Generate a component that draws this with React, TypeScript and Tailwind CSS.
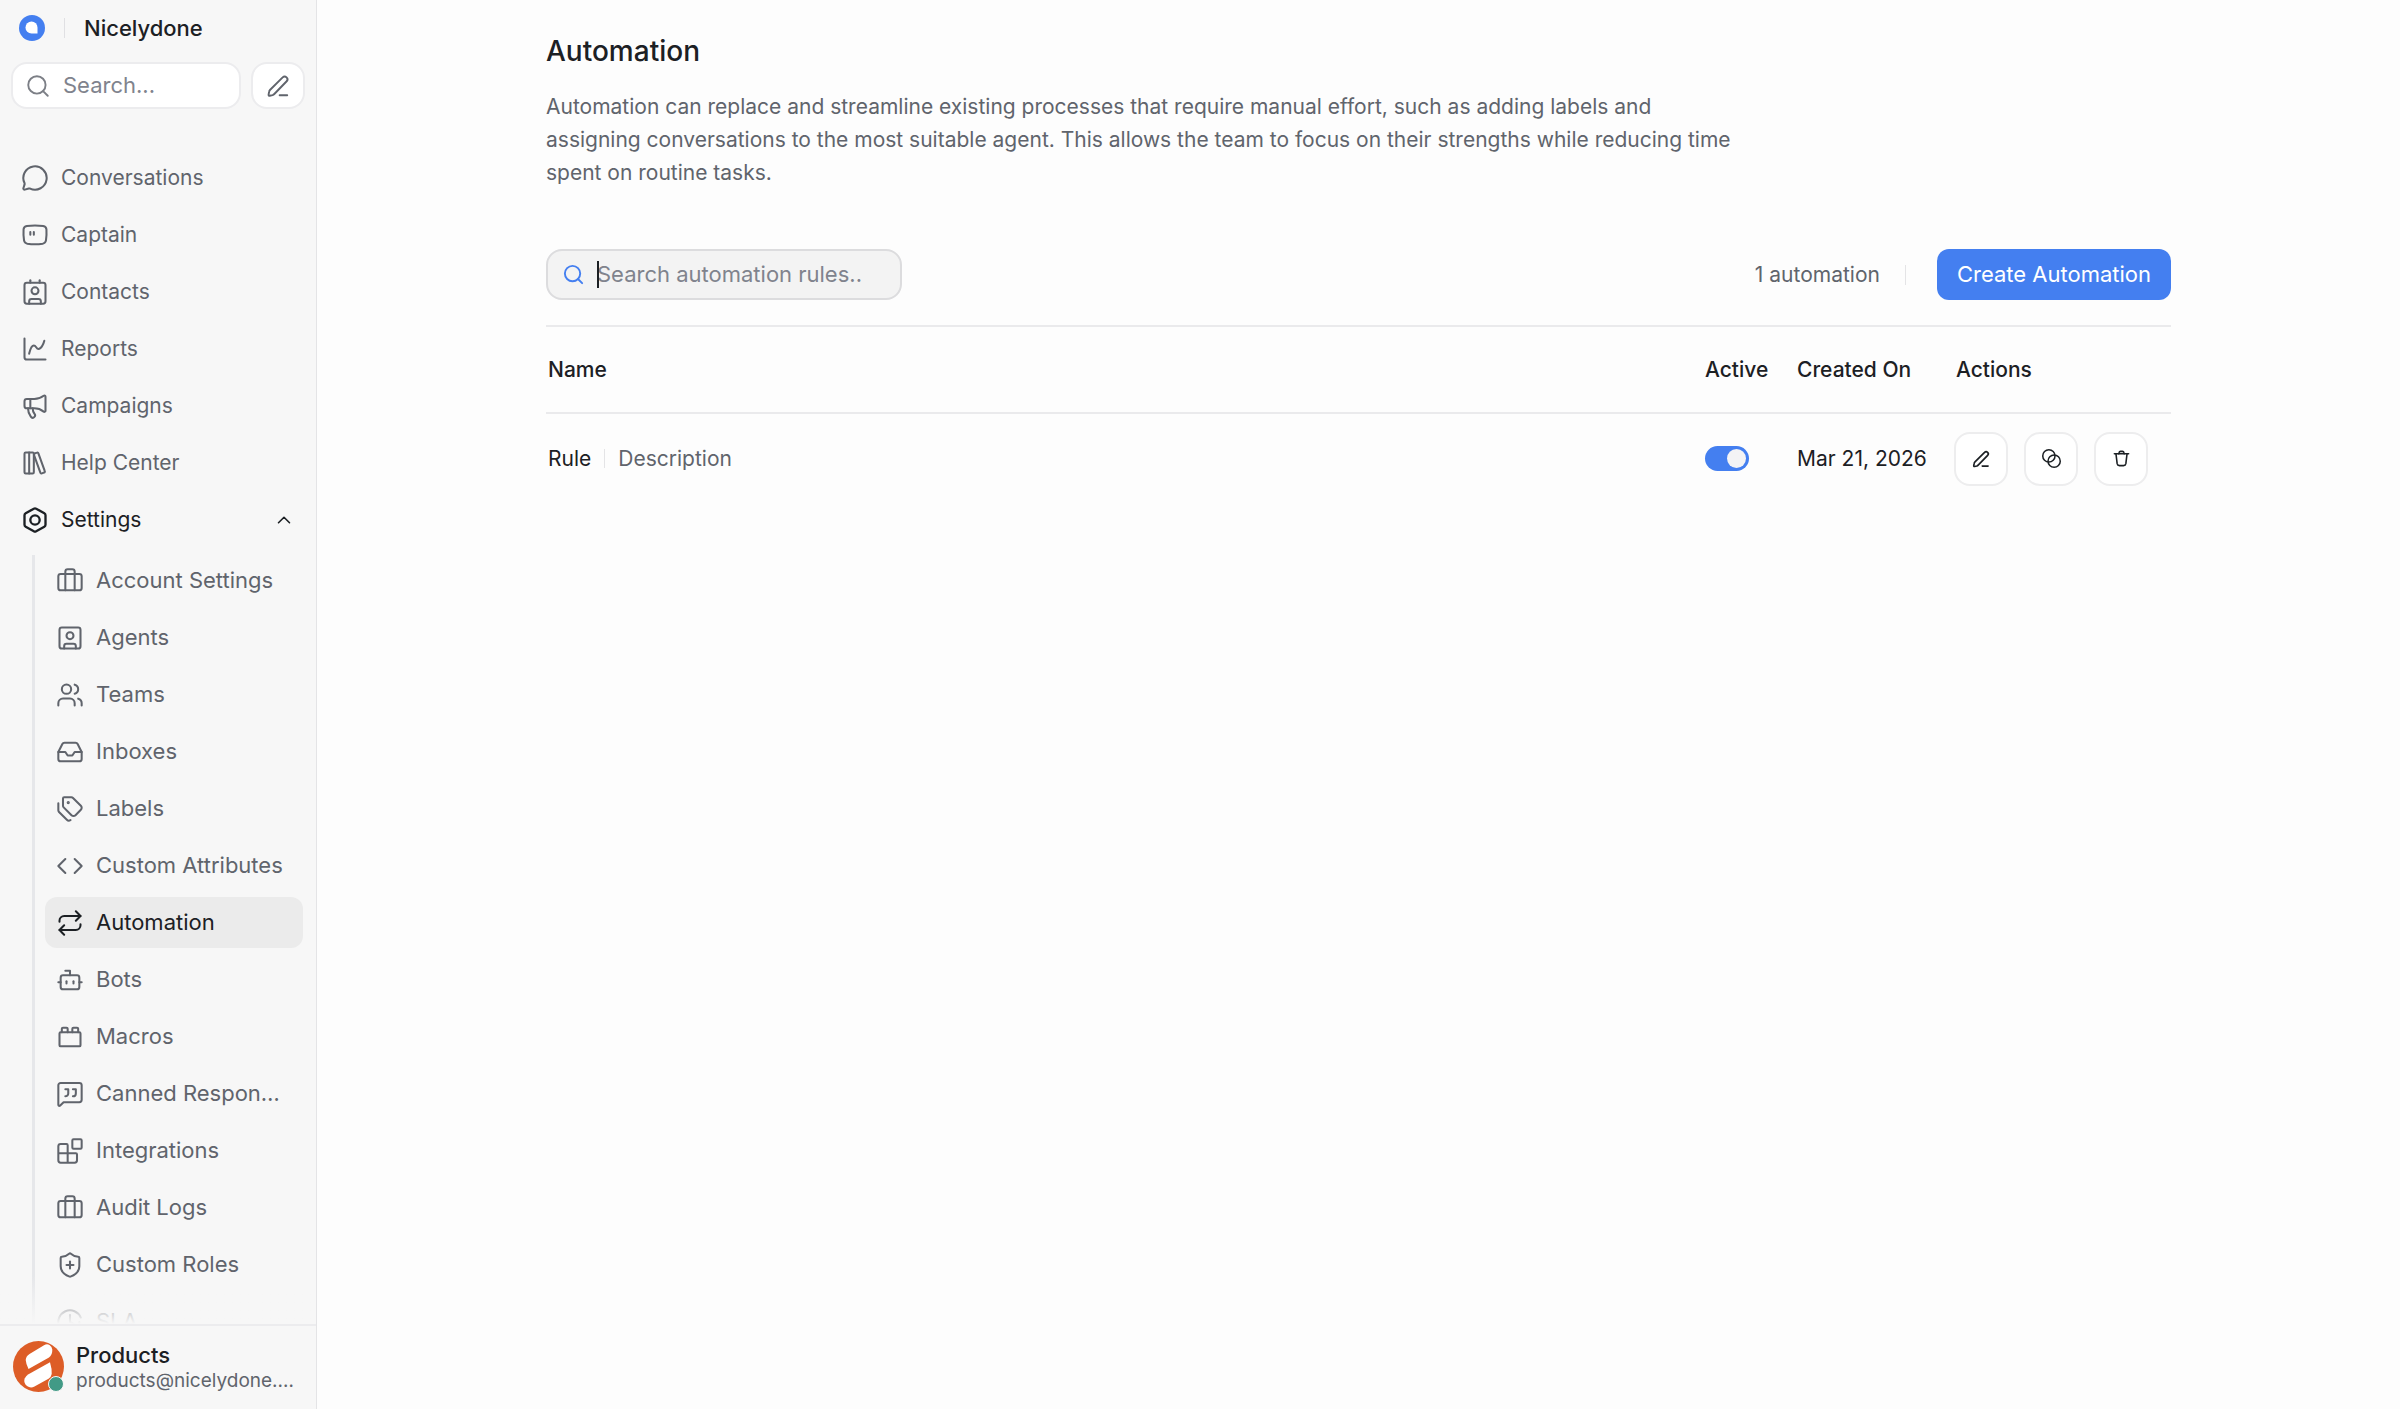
import { useState } from "react";
import type { ComponentType, ReactNode } from "react";
import {
  Blend,
  Blocks,
  Bolt,
  Bot,
  Briefcase,
  ChartSpline,
  ChevronUp,
  ClockAlert,
  Code,
  Contact,
  Inbox,
  LibraryBig,
  Megaphone,
  MessageCircle,
  Repeat,
  Search,
  ShieldPlus,
  SquareUser,
  Tags,
  ToyBrick,
  Users,
} from "lucide-react";

type IconProps = { className?: string; strokeWidth?: number | string };
type Icon = ComponentType<IconProps>;
type NavItem = { label: string; icon: Icon };

function Glyph({ className, strokeWidth = 1.75, children }: IconProps & { children: ReactNode }) {
  return (
    <svg
      className={className}
      viewBox="0 0 24 24"
      fill="none"
      stroke="currentColor"
      strokeWidth={strokeWidth}
      strokeLinecap="round"
      strokeLinejoin="round"
      aria-hidden="true"
    >
      {children}
    </svg>
  );
}

function Pen(props: IconProps) {
  return (
    <Glyph {...props}>
      <path d="M13.5 20.5H20.5" />
      <path d="M16.3 4.1a2.5 2.5 0 0 1 3.7 3.5L8.6 19.4c-.5.5-1 .8-1.6 1l-2.6.6c-.7.2-1.2-.4-1.1-1.1l.5-2.6c.1-.7.5-1.3 1-1.8z" />
    </Glyph>
  );
}

function Captain(props: IconProps) {
  return (
    <Glyph {...props}>
      <path d="M5 4.3c4.7-.7 9.300-.7 14 0 1.700.3 2.700 1.200 2.800 2.900.2 3.300.1 6.300-.4 9.400-.3 1.600-1.200 2.500-2.800 2.800-4.400.7-8.800.7-13.200 0-1.600-.3-2.500-1.200-2.800-2.800-.5-3.100-.6-6.100-.4-9.400.1-1.700 1.100-2.600 2.800-2.900z" />
      <path d="M8 9.500v2.200M11 9.500v2.200" />
    </Glyph>
  );
}

function Quote(props: IconProps) {
  return (
    <Glyph {...props}>
      <path d="M22 4.500v12.500a2 2 0 0 1-2 2H6.500L3.400 22c-.5.4-1.400.2-1.400-.7V4.500a2 2 0 0 1 2-2h16a2 2 0 0 1 2 2z" />
      <path d="M14.500 8h2.500v3.500a2.500 2.500 0 0 1-2.500 2.500M8 8h2.500v3.500A2.500 2.500 0 0 1 8 14" />
    </Glyph>
  );
}

function Bin(props: IconProps) {
  return (
    <Glyph {...props}>
      <path d="M3 6h18" />
      <path d="M5 6l1.500 12.500A3 3 0 0 0 9.500 21h5a3 3 0 0 0 3-2.500L19 6" />
      <path d="M8.500 6l.4-1.400A2 2 0 0 1 10.800 3h2.400a2 2 0 0 1 1.900 1.600l.4 1.400" />
    </Glyph>
  );
}

const mainNav: NavItem[] = [
  { label: "Conversations", icon: MessageCircle },
  { label: "Captain", icon: Captain },
  { label: "Contacts", icon: Contact },
  { label: "Reports", icon: ChartSpline },
  { label: "Campaigns", icon: Megaphone },
  { label: "Help Center", icon: LibraryBig },
];

const settingsNav: NavItem[] = [
  { label: "Account Settings", icon: Briefcase },
  { label: "Agents", icon: SquareUser },
  { label: "Teams", icon: Users },
  { label: "Inboxes", icon: Inbox },
  { label: "Labels", icon: Tags },
  { label: "Custom Attributes", icon: Code },
  { label: "Automation", icon: Repeat },
  { label: "Bots", icon: Bot },
  { label: "Macros", icon: ToyBrick },
  { label: "Canned Responses", icon: Quote },
  { label: "Integrations", icon: Blocks },
  { label: "Audit Logs", icon: Briefcase },
  { label: "Custom Roles", icon: ShieldPlus },
  { label: "SLA", icon: ClockAlert },
];

function NavLink({ item, active }: { item: NavItem; active?: boolean }) {
  const ItemIcon = item.icon;
  return (
    <a
      href="#"
      className={`flex h-[51px] items-center gap-3 rounded-xl pr-[18px] pl-[11px] ${
        active ? "bg-[#ebebeb] text-[#1c2024]" : "text-[#60646c]"
      }`}
    >
      <ItemIcon className="size-7 shrink-0" strokeWidth={1.75} />
      <span className="truncate">{item.label}</span>
    </a>
  );
}

function Sidebar() {
  return (
    <aside className="flex w-[317px] shrink-0 flex-col border-r border-[#e4e4e6] bg-[#f7f7f7]">
      <div className="flex h-14 items-center px-[19px]">
        <svg className="size-[26px]" viewBox="0 0 26 26" aria-hidden="true">
          <circle cx="13" cy="13" r="13" fill="#447ff0" />
          <path d="M12.500 6.500a6 6 0 0 1 6 6v6h-6a6 6 0 0 1 0-12z" fill="#fff" />
        </svg>
        <span className="ml-[19px] h-5 w-px bg-[#e0e0e3]" />
        <button className="ml-[19px] text-[22px] font-medium text-[#1c2024]">Nicelydone</button>
      </div>

      <div className="mt-[6px] flex gap-[10px] px-[11px]">
        <label className="flex h-[47px] min-w-0 flex-1 items-center gap-3 rounded-2xl border-2 border-[#ececee] bg-white pl-3 text-[#7c7f86]">
          <Search className="size-[26px] shrink-0" strokeWidth={1.75} />
          <input
            aria-label="Search"
            placeholder="Search..."
            className="w-full min-w-0 text-[22px] outline-none placeholder:text-[#80838d]"
          />
        </label>
        <button
          aria-label="New conversation"
          className="flex h-[47px] w-[54px] items-center justify-center rounded-2xl border-2 border-[#ececee] bg-white text-[#60646c]"
        >
          <Pen className="size-[26px]" />
        </button>
      </div>

      <nav className="relative mt-[43px] min-h-0 flex-1 overflow-hidden pr-[13px] pl-[10px]">
        <div className="flex flex-col gap-[6px]">
          {mainNav.map((item) => (
            <NavLink key={item.label} item={item} />
          ))}
          <button className="flex h-[51px] items-center gap-3 px-[11px] text-[#1c2024]">
            <Bolt className="size-7" strokeWidth={2} />
            <span className="flex-1 text-left">Settings</span>
            <ChevronUp className="-mr-[3px] size-[22px]" strokeWidth={1.75} />
          </button>
        </div>
        <div className="mt-[10px] ml-[22px] flex flex-col gap-[6px] border-l-[3px] border-[#e6e7ea] pl-[10px] text-[22px]">
          {settingsNav.map((item) => (
            <NavLink key={item.label} item={item} active={item.label === "Automation"} />
          ))}
        </div>
        <div className="pointer-events-none absolute inset-x-0 bottom-0 h-12 bg-linear-to-t from-[#f7f7f7] to-transparent" />
      </nav>

      <div className="flex h-[85px] items-center gap-3 border-t-2 border-[#ececee] px-[13px] pb-[2px]">
        <div className="relative shrink-0">
          <svg className="size-[51px]" viewBox="0 0 51 51" aria-hidden="true">
            <circle cx="25.500" cy="25.500" r="25.500" fill="#dd5d27" />
            <path
              d="M16.500 13 31 4.200Q34 2.400 36.500 4Q39 5.500 39.300 8.500Q39.500 14 36 16.500L15.500 28Q13 23 12.700 19Q13 15.200 16.500 13z"
              fill="#fff"
            />
            <path
              d="M37 21.300Q39 28 38.700 33Q38.300 36 35.500 37.700L21.500 45.500Q17.500 47.500 14 45Q10.500 42 11.500 37.800Q12.500 35.200 15.500 33.300z"
              fill="#fff"
            />
          </svg>
          <span className="absolute right-0 bottom-0 size-4 rounded-full border border-[#f7f7f7] bg-[#419a86]" />
        </div>
        <div className="min-w-0">
          <p className="text-[22px] leading-7 font-medium text-[#1c2024]">Products</p>
          <p className="truncate text-[19px] leading-6 text-[#60646c]">products@nicelydone.club</p>
        </div>
      </div>
    </aside>
  );
}

function ActionButton({ label, children }: { label: string; children: ReactNode }) {
  return (
    <button
      aria-label={label}
      className="flex size-[54px] items-center justify-center rounded-2xl border-2 border-[#ededee] bg-white"
    >
      {children}
    </button>
  );
}

export default function App() {
  const [active, setActive] = useState(true);

  return (
    <div className="flex h-screen bg-[#fdfdfd] font-[Inter,sans-serif] text-[21px] leading-[33px]">
      <Sidebar />
      <main className="min-w-0 flex-1 overflow-auto">
        <div className="mx-auto max-w-[1625px] pt-[29px]">
          <h1 className="text-[28px] leading-[44px] font-medium text-[#1c2024]">Automation</h1>
          <p className="mt-[17px] max-w-[1195px] text-[#60646c]">
            Automation can replace and streamline existing processes that require manual effort, such as adding labels
            and assigning conversations to the most suitable agent. This allows the team to focus on their strengths
            while reducing time spent on routine tasks.
          </p>

          <div className="mt-[60px] flex items-center justify-between">
            <label className="flex h-[51px] w-[356px] items-center gap-3 rounded-2xl border-2 border-[#dcdcde] bg-[#f3f3f3] pr-[38px] pl-[14px]">
              <Search className="size-[23px] shrink-0 text-[#447ff0]" strokeWidth={2} />
              <span className="relative flex min-w-0 flex-1">
                <input
                  aria-label="Search automation rules"
                  placeholder="Search automation rules..."
                  className="w-full min-w-0 text-[22px] outline-none placeholder:text-[#80838d]"
                />
                <span className="absolute top-[3px] left-0 h-[27px] w-[2px] bg-[#1c2024]" />
              </span>
            </label>
            <div className="flex items-center">
              <span className="text-[#60646c]">1 automation</span>
              <span className="mr-[31px] ml-[25px] h-5 w-px bg-[#e4e4e6]" />
              <button className="h-[51px] rounded-xl bg-[#447ff0] px-5 text-[22px] text-white">Create Automation</button>
            </div>
          </div>

          <table className="mt-[25px] w-full border-t-2 border-[#eaeaec] text-left text-[#1c2024]">
            <thead className="border-b-2 border-[#eaeaec]">
              <tr className="h-[87px]">
                <th className="pl-[2px] font-medium">Name</th>
                <th className="w-[92px] font-medium">Active</th>
                <th className="w-[157px] font-medium">Created On</th>
                <th className="w-[217px] pl-[2px] font-medium">Actions</th>
              </tr>
            </thead>
            <tbody>
              <tr className="h-[90px]">
                <td className="pl-[2px]">
                  <div className="flex items-center">
                    <span>Rule</span>
                    <span className="mx-[13px] h-[19px] w-px bg-[#e4e4e6]" />
                    <span className="text-[#60646c]">Description</span>
                  </div>
                </td>
                <td>
                  <input
                    type="checkbox"
                    role="switch"
                    aria-label="Active"
                    checked={active}
                    onChange={() => setActive(!active)}
                    className="flex h-[25px] w-11 appearance-none items-center rounded-full bg-[#c8c8cc] px-[3px] before:size-[19px] before:rounded-full before:bg-[#f3f3f5] checked:justify-end checked:bg-[#447ff0]"
                  />
                </td>
                <td className="whitespace-nowrap">Mar 21, 2026</td>
                <td>
                  <div className="flex gap-4">
                    <ActionButton label="Edit">
                      <Pen className="size-5" strokeWidth={2} />
                    </ActionButton>
                    <ActionButton label="Clone">
                      <Blend className="size-[21px]" strokeWidth={1.75} />
                    </ActionButton>
                    <ActionButton label="Delete">
                      <Bin className="size-[19px]" strokeWidth={2} />
                    </ActionButton>
                  </div>
                </td>
              </tr>
            </tbody>
          </table>
        </div>
      </main>
    </div>
  );
}
